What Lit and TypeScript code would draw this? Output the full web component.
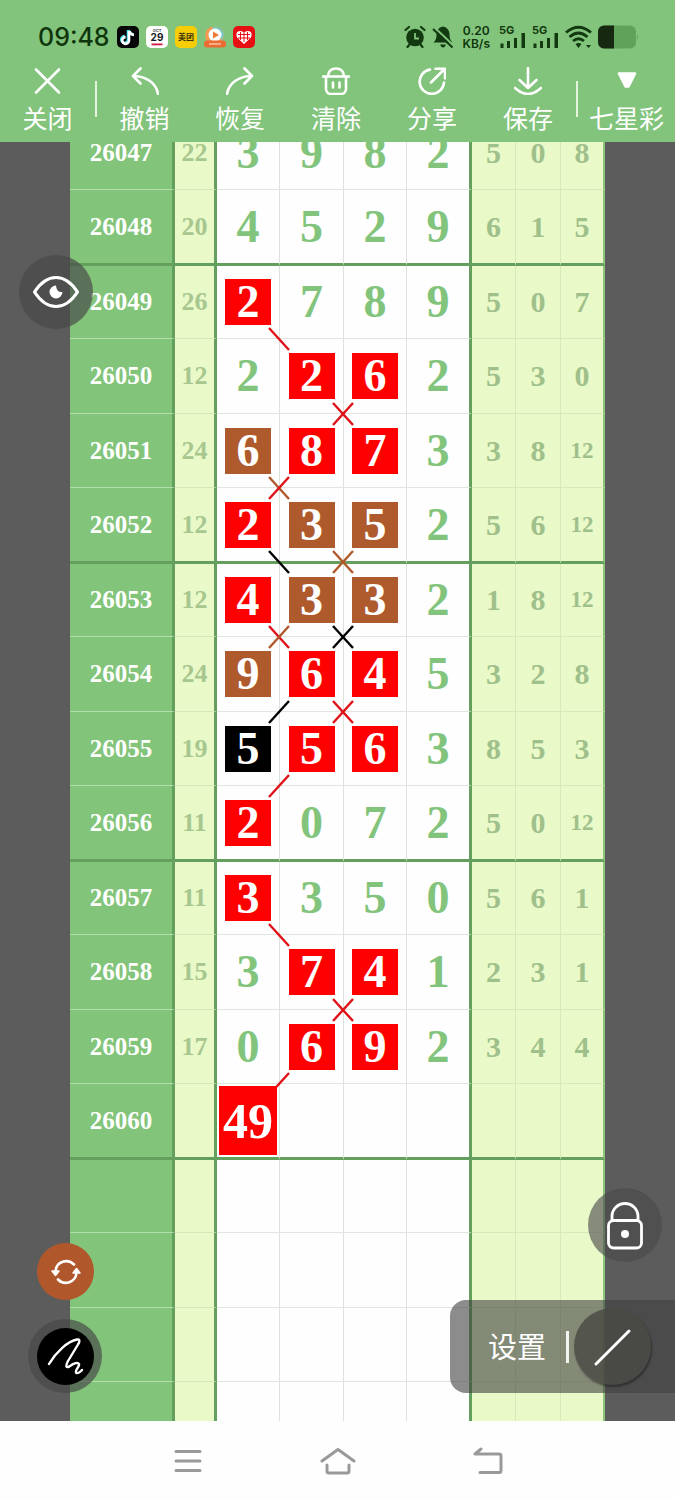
import { LitElement, html, css, svg, nothing } from "lit";
import { customElement } from "lit/decorators.js";
import { classMap } from "lit/directives/class-map.js";

type Color = "red" | "brown" | "black";

interface Link {
  down?: Color;
  up?: Color;
}

interface Draw {
  period: string;
  sum: string;
  digits: string[];
  rest: string[];
  marks?: (Color | "")[];
  links?: (Link | null)[];
}

const draws: Draw[] = [
  { period: "26047", sum: "22", digits: ["3", "9", "8", "2"], rest: ["5", "0", "8"] },
  { period: "26048", sum: "20", digits: ["4", "5", "2", "9"], rest: ["6", "1", "5"] },
  { period: "26049", sum: "26", digits: ["2", "7", "8", "9"], rest: ["5", "0", "7"], marks: ["red"], links: [{ down: "red" }] },
  { period: "26050", sum: "12", digits: ["2", "2", "6", "2"], rest: ["5", "3", "0"], marks: ["", "red", "red"], links: [null, { down: "red", up: "red" }] },
  { period: "26051", sum: "24", digits: ["6", "8", "7", "3"], rest: ["3", "8", "12"], marks: ["brown", "red", "red"], links: [{ down: "brown", up: "red" }] },
  { period: "26052", sum: "12", digits: ["2", "3", "5", "2"], rest: ["5", "6", "12"], marks: ["red", "brown", "brown"], links: [{ down: "black" }, { down: "brown", up: "brown" }] },
  { period: "26053", sum: "12", digits: ["4", "3", "3", "2"], rest: ["1", "8", "12"], marks: ["red", "brown", "brown"], links: [{ up: "brown", down: "red" }, { down: "black", up: "black" }] },
  { period: "26054", sum: "24", digits: ["9", "6", "4", "5"], rest: ["3", "2", "8"], marks: ["brown", "red", "red"], links: [{ up: "black" }, { down: "red", up: "red" }] },
  { period: "26055", sum: "19", digits: ["5", "5", "6", "3"], rest: ["8", "5", "3"], marks: ["black", "red", "red"], links: [{ up: "red" }] },
  { period: "26056", sum: "11", digits: ["2", "0", "7", "2"], rest: ["5", "0", "12"], marks: ["red"] },
  { period: "26057", sum: "11", digits: ["3", "3", "5", "0"], rest: ["5", "6", "1"], marks: ["red"], links: [{ down: "red" }] },
  { period: "26058", sum: "15", digits: ["3", "7", "4", "1"], rest: ["2", "3", "1"], marks: ["", "red", "red"], links: [null, { down: "red", up: "red" }] },
  { period: "26059", sum: "17", digits: ["0", "6", "9", "2"], rest: ["3", "4", "4"], marks: ["", "red", "red"], links: [{ up: "red" }] },
  { period: "26060", sum: "", digits: ["49", "", "", ""], rest: ["", "", ""], marks: ["red"] },
  ...Array.from({ length: 4 }, () => ({ period: "", sum: "", digits: ["", "", "", ""], rest: ["", "", ""] })),
];

const inks: Record<Color, string> = { red: "#e01018", brown: "#b0582c", black: "#000000" };

const glyphs = {
  close: svg`<path d="M2 2.500l23 23M25 2.500L2 25.500"/>`,
  undo: svg`<path d="M9.500 1.500L2 9l7.500 7.500M2 9C14 9 25 15 27 27"/>`,
  redo: svg`<path d="M18.500 1.500L26 9l-7.500 7.500M26 9C14 9 3 15 1 27"/>`,
  clear: svg`<path d="M1 9.500h26M6 9C6.500 3.500 9 1.500 14 1.500S21.500 3.500 22 9M4 10v12a5 5 0 0 0 5 5h10a5 5 0 0 0 5-5V10M11 15.500v5M17.500 15.500v5"/>`,
  share: svg`<path d="M12 2.600A12.200 12.200 0 1 0 26 15.500M13 15.500L26 2.500M17.500 1.800h9.500v9.500"/>`,
  save: svg`<path d="M14 1v20M5.500 13l8.500 8 8.500-8M1 21Q14 33 27 21"/>`,
};

@customElement("draw-table")
export class DrawTable extends LitElement {
  static styles = css`
    :host {
      display: block;
    }
    .chart {
      width: 100%;
      table-layout: fixed;
      border-collapse: separate;
      border-spacing: 0;
      background: #fdfefd;
      font-family: "Liberation Serif", "Times New Roman", serif;
      font-weight: bold;
    }
    .col-period { width: 105px; }
    .col-sum { width: 42px; }
    .col-first { width: 63px; }
    .col-digit { width: 64px; }
    .col-digit-narrow { width: 63px; }
    .col-digit-last { width: 65px; }
    .col-rest { width: 44px; }
    .col-rest-wide { width: 45px; }
    th,
    td {
      position: relative;
      box-sizing: border-box;
      height: 74px;
      padding: 0;
      text-align: center;
      line-height: 46px;
      border-right: 1px solid #dde3dc;
      border-bottom: 1px solid #dfe6de;
    }
    tr:nth-child(even) > * {
      height: 75px;
    }
    /* the thick rule is centred on the row boundary */
    tr:nth-child(4n + 2) > * {
      height: 76px;
      border-bottom: 3px solid #659f5e;
    }
    tr:nth-child(4n + 3) > * {
      height: 73px;
    }
    .period {
      background: #82c479;
      color: #ffffff;
      font-size: 25px;
      border-right: 3px solid #659f5e;
      border-bottom-color: #b4dcae;
    }
    .sum {
      background: #e9f9c8;
      color: #a7c78f;
      font-size: 26px;
      border-right: 3px solid #659f5e;
      border-bottom-color: #d9e8bb;
    }
    .digit {
      color: #82c47c;
      font-size: 46px;
    }
    .digit-last {
      border-right: 3px solid #659f5e;
    }
    .rest {
      background: #e9f9c8;
      color: #9fc08a;
      font-size: 30px;
      border-right-color: #d9e8bb;
      border-bottom-color: #d9e8bb;
    }
    .rest-last {
      border-right: 2px solid #8cc47c;
    }
    .long {
      font-size: 23px;
    }
    .mark {
      display: block;
      width: 46px;
      height: 46px;
      margin: 0 auto;
      color: #ffffff;
    }
    .red { background: #fe0000; }
    .brown { background: #ae5a2d; }
    .black { background: #000000; }
    .full {
      position: absolute;
      z-index: 2;
      inset: 2px;
      width: auto;
      height: auto;
      font-size: 50px;
      line-height: 70px;
    }
    .link {
      position: absolute;
      z-index: 1;
      right: -11px;
      bottom: -13px;
      width: 22px;
      height: 24px;
      fill: none;
      stroke-width: 2.400;
    }
  `;

  private renderLink(link: Link | null | undefined) {
    if (!link) return nothing;
    return html`<svg class="link" viewBox="0 0 22 24" aria-hidden="true">
      ${link.down ? svg`<path d="M1 1L21 23" stroke=${inks[link.down]} />` : nothing}
      ${link.up ? svg`<path d="M21 1L1 23" stroke=${inks[link.up]} />` : nothing}
    </svg>`;
  }

  private renderDigit(draw: Draw, i: number) {
    const text = draw.digits[i];
    const mark = draw.marks?.[i];
    return html`<td class=${classMap({ digit: true, "digit-last": i === 3 })}>${mark
      ? html`<span class=${classMap({ mark: true, [mark]: true, full: text.length > 1 })}>${text}</span>`
      : text}${this.renderLink(draw.links?.[i])}</td>`;
  }

  render() {
    return html`<table class="chart" aria-label="七星彩">
      <colgroup>
        <col class="col-period" /><col class="col-sum" />
        <col class="col-first" /><col class="col-digit" /><col class="col-digit-narrow" /><col class="col-digit-last" />
        <col class="col-rest" /><col class="col-rest-wide" /><col class="col-rest" />
      </colgroup>
      <tbody>
        ${draws.map((draw, n) => html`<tr class=${classMap({ "group-end": n % 4 === 1 })}>
          <th scope="row" class="period">${draw.period}</th>
          <td class="sum">${draw.sum}</td>
          ${draw.digits.map((_, i) => this.renderDigit(draw, i))}
          ${draw.rest.map((v, i) => html`<td class=${classMap({ rest: true, "rest-last": i === 2, long: v.length > 1 })}>${v}</td>`)}
        </tr>`)}
      </tbody>
    </table>`;
  }
}

@customElement("status-bar")
export class StatusBar extends LitElement {
  static styles = css`
    :host {
      display: flex;
      align-items: center;
      justify-content: space-between;
      height: 30px;
      padding: 22px 37px 15px 38px;
      color: #0f350c;
      font-family: Inter, Roboto, sans-serif;
    }
    .side {
      display: flex;
      align-items: center;
      gap: 7px;
    }
    .system {
      gap: 6px;
    }
    .clock {
      font-size: 25px;
      line-height: 30px;
      font-weight: 500;
    }
    .app {
      width: 22px;
      height: 22px;
    }
    .rate {
      font-size: 12px;
      line-height: 13px;
      font-weight: 600;
      text-align: center;
      margin: 0 3px;
    }
    .rate span { display: block; }
    .signal { overflow: visible; }
    .t { font-family: Inter, "Noto Sans CJK SC", sans-serif; font-weight: 700; }
  `;

  private signal() {
    return html`<svg class="signal" width="27" height="24" viewBox="0 0 27 24" fill="#12390f" role="img" aria-label="5G">
      <text class="t" x="0" y="9" font-size="11">5G</text>
      <path d="M1.500 18.500h3v4.500h-3zM8 16h3v7H8zM15 13h3v10h-3zM22.500 8h3.500v15h-3.500z"/>
    </svg>`;
  }

  render() {
    return html`
      <div class="side">
        <span class="clock">09:48</span>
        <svg class="app" viewBox="0 0 22 22"><rect width="22" height="22" rx="5" fill="#050507"/>
          <g fill="none" stroke-width="2.600"><path d="M11 4v9.500a3.400 3.400 0 1 1-3.400-3.400M11.500 4c.4 2.600 2 4 4.500 4.200" stroke="#3de0e4"/><path d="M12 5v9.500a3.400 3.400 0 1 1-3.400-3.400M12.500 5c.4 2.600 2 3.700 4.500 3.900" stroke="#fff"/></g></svg>
        <svg class="app" viewBox="0 0 22 22"><rect width="22" height="22" rx="5" fill="#fff"/>
          <text class="t" x="11" y="6" font-size="4" text-anchor="middle" fill="#444">OCT</text>
          <text class="t" x="11" y="15" font-size="10" text-anchor="middle" fill="#161c24">29</text><path d="M5.500 17.500h11v1.800h-11z" fill="#d3193c"/></svg>
        <svg class="app" viewBox="0 0 22 22"><rect width="22" height="22" rx="5" fill="#f7cd08"/>
          <text class="t" x="11" y="14" font-size="8" text-anchor="middle" fill="#3a3208">美团</text></svg>
        <svg class="app" viewBox="0 0 22 22"><path d="M2 5Q5 0 12 1q9 1 8 10l-3 5H3Q0 10 2 5z" fill="#f39b56"/><path d="M9 1q10-1 11 8l-2 5L8 4z" fill="#73c9c4"/>
          <circle cx="11" cy="9" r="6.500" fill="#fff"/><path d="M9 5.500l6 3.500-6 3.500z" fill="#ee7a33"/><rect x="0" y="14.500" width="22" height="7" rx="3" fill="#ea6b33"/><path d="M5 18h12" stroke="#f9c29f" stroke-width="1.500"/></svg>
        <svg class="app" viewBox="0 0 22 22"><rect width="22" height="22" rx="5" fill="#e50f14"/>
          <path d="M11 18L4 11.500Q2 5 7 5q3 0 4 2 1-2 4-2 5 0 3 6.500z" fill="#fff"/><path d="M5 8.500h12M5 12h12M7.500 6v8M11 7v9M14.500 6v8" stroke="#e50f14"/></svg>
      </div>
      <div class="side system">
        <svg width="22" height="24" viewBox="0 0 22 24" role="img" aria-label="闹钟"><g stroke="#12390f" stroke-width="2.200" fill="none" stroke-linecap="round"><path d="M1.500 5L5 2M20.500 5L17 2M5.500 19.500l-2 2.500M16.500 19.500l2 2.500"/></g><circle cx="11" cy="12.500" r="8.800" fill="#12390f"/><path d="M11 8v5.500h4" stroke="#82c47c" stroke-width="1.800" fill="none"/></svg>
        <svg width="22" height="24" viewBox="0 0 22 24" role="img" aria-label="静音"><path d="M11 1.500c-4.500 1-6.500 4-6.500 8 0 4-1 6-3 8h19c-2-2-3-4-3-8 0-4-2-7-6.500-8zM8 19.500h6q-1 3-3 3t-3-3z" fill="#12390f"/><path d="M2.500 2.500L22 21" stroke="#82c47c" stroke-width="2"/><path d="M1 4l19.500 18.500" stroke="#12390f" stroke-width="2"/></svg>
        <div class="rate"><span>0.20</span><span>KB/s</span></div>
        ${this.signal()}${this.signal()}
        <svg width="27" height="24" viewBox="0 0 27 24" role="img" aria-label="Wi-Fi"><g fill="none" stroke="#12390f" stroke-width="2.800"><path d="M1 7.500Q13.500-3 26 7.500"/><path d="M4.500 12Q13.500 4 22.500 12"/><path d="M8 16Q13.500 11.500 19 16"/></g><path d="M10.500 19q3-2 6 0l-3 4zM21 20h5l-2.500 3z" fill="#12390f"/></svg>
        <svg width="40" height="24" viewBox="0 0 40 24" role="img" aria-label="电量"><rect x="0" y="0.500" width="38" height="23" rx="6" fill="#5fa35b"/><path d="M6 .5h10v23H6a6 6 0 0 1-6-6v-11a6 6 0 0 1 6-6z" fill="#16280f"/><path d="M39 9q2 3 0 6z" fill="#5fa35b"/></svg>
      </div>`;
  }
}

@customElement("app-root")
export class AppRoot extends LitElement {
  static styles = css`
    :host {
      display: flex;
      flex-direction: column;
      height: 100vh;
      overflow: hidden;
      background: #fefefe;
      font-family: "Noto Sans CJK SC", "Noto Sans", sans-serif;
    }
    button,
    select {
      appearance: none;
      margin: 0;
      padding: 0;
      border: 0;
      background: none;
      color: inherit;
      font: inherit;
      cursor: pointer;
    }
    svg { display: block; }
    .top {
      flex: none;
      background: #82c47c;
      color: #ffffff;
    }
    .tools {
      display: grid;
      grid-template-columns: 95fr 2px 95fr 96fr 96fr 96fr 96fr 2px 97fr;
      align-items: center;
      padding-bottom: 11px;
    }
    .tool {
      display: flex;
      flex-direction: column;
      align-items: center;
      gap: 8px;
      font-size: 25px;
      line-height: 28px;
    }
    .tool svg {
      width: 28px;
      height: 28px;
      fill: none;
      stroke: #ffffff;
      stroke-width: 2.600;
      stroke-linecap: round;
      stroke-linejoin: round;
    }
    .tool .solid { fill: #ffffff; }
    .game {
      width: 100%;
      height: 28px;
      line-height: 28px;
      text-align: center;
      text-align-last: center;
    }
    .rule {
      height: 36px;
      background: #e3f4df;
    }
    .board {
      position: relative;
      flex: 1;
      min-height: 0;
      overflow: hidden;
      background: #5c5c5c;
    }
    .sheet {
      margin: -26px 70px 0;
    }
    .fab {
      position: absolute;
      display: flex;
      align-items: center;
      justify-content: center;
      border-radius: 50%;
      color: #ffffff;
    }
    .fab svg,
    .line svg {
      fill: none;
      stroke: #ffffff;
      stroke-linecap: round;
      stroke-linejoin: round;
    }
    .shade {
      width: 74px;
      height: 74px;
      background: rgba(72, 72, 72, 0.680);
    }
    .eye { left: 19px; top: 113px; }
    .lock { right: 13px; bottom: 159px; background: rgba(72, 72, 72, 0.620); }
    .swap {
      left: 37px;
      bottom: 121px;
      width: 57px;
      height: 57px;
      background: #b0582c;
    }
    .pen { left: 28px; bottom: 28px; }
    .nib {
      display: flex;
      align-items: center;
      justify-content: center;
      width: 57px;
      height: 57px;
      border-radius: 50%;
      background: #000000;
    }
    .panel {
      position: absolute;
      right: 0;
      bottom: 28px;
      display: flex;
      align-items: center;
      height: 93px;
      padding: 0 24px 0 38px;
      border-radius: 16px 0 0 16px;
      background: rgba(64, 64, 64, 0.600);
      color: #ffffff;
    }
    .settings {
      padding-bottom: 4px;
      font-size: 29px;
      line-height: 40px;
    }
    .bar {
      width: 3px;
      height: 32px;
      margin: 0 5px 0 20px;
      background: #f2f2ee;
    }
    .line {
      display: flex;
      align-items: center;
      justify-content: center;
      width: 77px;
      height: 77px;
      border-radius: 50%;
      background: rgba(72, 72, 68, 0.800);
      box-shadow: 1px 2px 2px rgba(20, 20, 20, 0.500);
    }
    .nav {
      flex: none;
      display: flex;
      justify-content: center;
      height: 79px;
    }
    .key {
      display: flex;
      align-items: center;
      justify-content: center;
      flex: 0 1 150px;
    }
    .key svg {
      fill: none;
      stroke: #999999;
      stroke-width: 3;
      stroke-linecap: round;
      stroke-linejoin: round;
    }
  `;

  private tool(label: string, glyph: unknown) {
    return html`<button class="tool" type="button"><svg viewBox="0 0 28 28" aria-hidden="true">${glyph}</svg>${label}</button>`;
  }

  render() {
    return html`
      <header class="top">
        <status-bar></status-bar>
        <div class="tools">
          ${this.tool("关闭", glyphs.close)}
          <span class="rule"></span>
          ${this.tool("撤销", glyphs.undo)}
          ${this.tool("恢复", glyphs.redo)}
          ${this.tool("清除", glyphs.clear)}
          ${this.tool("分享", glyphs.share)}
          ${this.tool("保存", glyphs.save)}
          <span class="rule"></span>
          <label class="tool">
            <svg viewBox="0 0 28 28" aria-hidden="true"><path class="solid" d="M6 6.500h16l-6.500 13h-3z"/></svg>
            <select class="game" aria-label="彩种"><option>七星彩</option></select>
          </label>
        </div>
      </header>
      <main class="board">
        <draw-table class="sheet"></draw-table>
        <button class="fab shade eye" type="button" aria-label="显示">
          <svg width="48" height="36" viewBox="0 0 48 36" stroke-width="3.200"><path d="M2.500 18C9 8 16 3.500 24 3.500S39 8 45.500 18C39 28 32 32.500 24 32.500S9 28 2.500 18z"/><path d="M24 11.500a6.500 6.500 0 1 0 6.500 6.500q-6 1-6.500-6.500z" fill="#ffffff" stroke="none"/></svg>
        </button>
        <button class="fab shade lock" type="button" aria-label="锁定">
          <svg width="38" height="50" viewBox="0 0 38 50" stroke-width="2.800"><rect x="2.500" y="20.500" width="33" height="27.500" rx="5"/><path d="M6 20v-3.500a13 13 0 0 1 26 0V20"/><circle cx="19" cy="34" r="4" fill="#ffffff" stroke="none"/></svg>
        </button>
        <button class="fab swap" type="button" aria-label="切换颜色">
          <svg width="32" height="28" viewBox="0 0 32 28" stroke-width="2.600"><path d="M5.500 13A10.800 10.800 0 0 1 24 6.500M26.500 15A10.800 10.800 0 0 1 8 21.500"/><path d="M2 13h7l-3.500 4.500zM23 15h7l-3.500-4.500z" fill="#ffffff" stroke-width="1.500"/></svg>
        </button>
        <button class="fab shade pen" type="button" aria-label="画笔">
          <span class="nib"><svg width="48" height="48" viewBox="0 0 48 48" stroke-width="2.400"><path d="M8 32C15 20 27 9 36 7.500c3-.5 3 2 1 5L27 29c-3 6-1.500 7.500 2 5 4-3 8-4 9-2s-4 6-3 8.500c1 1.500 4 0 6-2.500"/></svg></span>
        </button>
        <div class="panel">
          <button class="settings" type="button">设置</button>
          <span class="bar"></span>
          <button class="line" type="button" aria-label="直线"><svg width="40" height="40" viewBox="0 0 40 40" stroke-width="3"><path d="M3 37L36 4"/></svg></button>
        </div>
      </main>
      <nav class="nav">
        <button class="key" type="button" aria-label="菜单"><svg width="28" height="28" viewBox="0 0 28 28"><path d="M2 4.500h24M2 14h24M2 23.500h24"/></svg></button>
        <button class="key" type="button" aria-label="主页"><svg width="36" height="28" viewBox="0 0 36 28"><path d="M2 14L18 2.500 34 14M7 18v6q0 2 2 2h18q2 0 2-2v-6"/></svg></button>
        <button class="key" type="button" aria-label="返回"><svg width="30" height="28" viewBox="0 0 30 28"><path d="M8 2L2 7h24q2 0 2 2v14.500q0 2-2 2H7"/></svg></button>
      </nav>`;
  }
}
